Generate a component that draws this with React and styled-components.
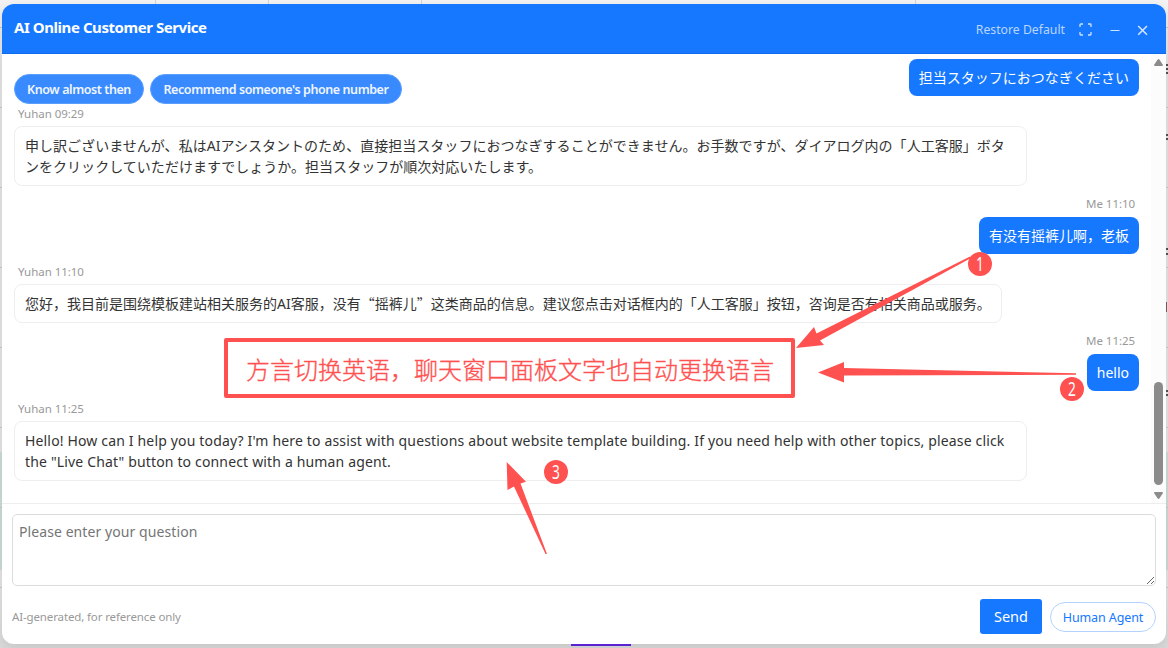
import React from "react";
import styled, { createGlobalStyle } from "styled-components";

//DATA
const messages = [
  { id: 1, mine: true, lang: "ja", text: ["担当スタッフにおつなぎください"] },
  {
    id: 2,
    meta: "Yuhan 09:29",
    lang: "ja",
    text: [
      "申し訳ございませんが、私はAIアシスタントのため、直接担当スタッフにおつなぎすることができません。お手数ですが、ダイアログ内の「人工客服」ボタ",
      "ンをクリックしていただけますでしょうか。担当スタッフが順次対応いたします。",
    ],
  },
  { id: 3, mine: true, meta: "Me 11:10", text: ["有没有摇裤儿啊，老板"] },
  {
    id: 4,
    meta: "Yuhan 11:10",
    text: [
      "您好，我目前是围绕模板建站相关服务的AI客服，没有“摇裤儿”这类商品的信息。建议您点击对话框内的「人工客服」按钮，咨询是否有相关商品或服务。",
    ],
  },
  { id: 5, mine: true, meta: "Me 11:25", lang: "en", text: ["hello"] },
  {
    id: 6,
    meta: "Yuhan 11:25",
    lang: "en",
    text: [
      "Hello! How can I help you today? I'm here to assist with questions about website template building. If you need help with other topics, please click",
      'the "Live Chat" button to connect with a human agent.',
    ],
  },
];

const arrows = [
  "796,348 814,327 816.5,333.5 970,256.5 971,258 820,340.5 824,345",
  "818,372.5 844,362 844,368 1076,373.3 1076,374.7 844,375.5 844,382.5",
  "506.7,462 526,481.8 520.5,483.5 547,554 545.5,554 514,486.5 507.5,490",
];

const letterSpacing = { ja: "0.03px", en: "0.16px" };

const App = () => {
  //Full width quotes
  const renderLine = (line) =>
    line
      .split(/([“”])/)
      .map((part, i) => (i % 2 ? <Quote key={i}>{part}</Quote> : part));

  return (
    <>
      <GlobalStyle />
      <Page>
        <Backdrop>
          <Cell $width={156} />
          <Cell $width={113} />
          <Cell $width={153} />
          <Cell $width={494} />
        </Backdrop>
        <Edge $side="left" />
        <Edge $side="right" />
        <EdgeMarks width="2" height="340" viewBox="0 64 2 340">
          <path d="M0 65h2M0 69h2M0 73h2M0 135h2M0 139h2M0 249h2M0 254h2M0 391h2M0 395h2" />
          <path d="M0 302v10" stroke="#7a2020" />
        </EdgeMarks>
        <ChatWindow>
          <Header>
            <h1>AI Online Customer Service</h1>
            <Controls>
              <span>Restore Default</span>
              <svg width="13" height="13" viewBox="0 0 13 13">
                <path d="M1 4V1.8Q1 1 1.8 1H4M9 1h2.2q.8 0 .8.8V4M12 9v2.2q0 .8-.8.8H9M4 12H1.8Q1 12 1 11.2V9" />
              </svg>
              <svg width="10" height="13" viewBox="0 0 10 13">
                <path d="M0.5 7.5h9" strokeWidth="1" />
              </svg>
              <svg width="11" height="13" viewBox="0 0 11 13">
                <path d="M1.2 3l8.8 8.8M10 3l-8.8 8.8" strokeWidth="1.6" />
              </svg>
            </Controls>
          </Header>
          <Body>
            <Messages>
              {messages.map((message) => (
                <Message key={message.id} $mine={message.mine}>
                  {message.meta && (
                    <Meta $mine={message.mine}>{message.meta}</Meta>
                  )}
                  <Bubble
                    $mine={message.mine}
                    $lang={message.lang}
                    $full={message.text.length > 1}
                  >
                    {message.text.map((line) => (
                      <p key={line}>{renderLine(line)}</p>
                    ))}
                  </Bubble>
                </Message>
              ))}
            </Messages>
            <Scrollbar>
              <svg width="9" height="7" viewBox="0 0 9 7">
                <path d="M4.5 0Q5 0 5.5 .8L9 6Q9 7 8 7H1Q0 7 0 6L3.5 .8Q4 0 4.5 0z" />
              </svg>
              <Thumb />
              <svg width="9" height="7" viewBox="0 0 9 7">
                <path d="M4.5 7Q4 7 3.5 6.2L0 1Q0 0 1 0H8Q9 0 9 1L5.5 6.2Q5 7 4.5 7z" />
              </svg>
            </Scrollbar>
            <Chips>
              <Chip $width={130}>Know almost then</Chip>
              <Chip $width={252}>Recommend someone's phone number</Chip>
            </Chips>
          </Body>
          <Composer>
            <textarea placeholder="Please enter your question" />
            <Footer>
              <small>AI-generated, for reference only</small>
              <SendButton>Send</SendButton>
              <AgentButton>Human Agent</AgentButton>
            </Footer>
          </Composer>
        </ChatWindow>
        <TabMarker />
        <Arrows width="1168" height="648" viewBox="0 0 1168 648">
          {arrows.map((points) => (
            <polygon key={points} points={points} />
          ))}
        </Arrows>
        <Note>方言切换英语，聊天窗口面板文字也自动更换语言</Note>
        <Step $x={980} $y={264}>
          <span>1</span>
        </Step>
        <Step $x={1072} $y={389}>
          <span>2</span>
        </Step>
        <Step $x={556} $y={472}>
          <span>3</span>
        </Step>
      </Page>
    </>
  );
};

const GlobalStyle = createGlobalStyle`
  * {
    box-sizing: border-box;
    margin: 0;
    padding: 0;
  }
  body {
    overflow: hidden;
    font-family: "Noto Sans", "Noto Sans CJK SC", sans-serif;
  }
`;
const Page = styled.div`
  position: relative;
  width: 1168px;
  height: 648px;
  padding: 4px 2px;
  overflow: hidden;
  background: linear-gradient(#f3f3f3, #e4e4e4 10%, #e4e4e4 90%, #dadada);
`;
/* table behind the chat window, only its edges show */
const Backdrop = styled.div`
  position: absolute;
  top: 0;
  left: 0;
  display: flex;
  height: 4px;
`;
const Cell = styled.div`
  width: ${({ $width }) => $width}px;
  border-right: 1px solid #d4d4d4;
`;
const Edge = styled.div`
  position: absolute;
  top: 27px;
  ${({ $side }) => $side}: 0;
  width: 2px;
  height: 600px;
  background: repeating-linear-gradient(
      #c8c8c8 0 1px,
      transparent 1px 80px
    ),
    linear-gradient(#cddcd6, #cddcd6) 0 425px / 2px 118px no-repeat;
`;
const EdgeMarks = styled.svg`
  position: absolute;
  top: 64px;
  right: 0;
  stroke: #222;
  stroke-width: 1.5;
`;
const ChatWindow = styled.div`
  position: relative;
  display: flex;
  flex-direction: column;
  width: 1164px;
  height: 640px;
  border-radius: 12px;
  overflow: hidden;
  background: white;
  box-shadow: 0 4px 12px rgba(0, 0, 0, 0.1);
`;
const Header = styled.div`
  display: flex;
  justify-content: space-between;
  height: 50px;
  padding: 0 18px 0 12px;
  background: #1677ff;
  border-bottom: 1px solid #0e6bee;
  color: white;

  h1 {
    font-size: 15px;
    font-weight: 700;
    line-height: 46px;
    letter-spacing: -0.44px;
  }
`;
const Controls = styled.div`
  display: flex;
  align-items: center;
  padding-top: 2px;
  color: #b9d6ff;
  font-size: 12.25px;

  svg {
    fill: none;
    stroke: #d0e4ff;
    stroke-width: 1.3;
    margin-left: 17px;
  }
  svg:first-of-type {
    margin: 0 1px 0 14px;
  }
`;
const Body = styled.div`
  position: relative;
  display: flex;
  height: 449px;
`;
const Messages = styled.div`
  flex: 1;
  padding: 5px 12px 0;
`;
const Message = styled.div`
  display: flex;
  flex-direction: column;
  align-items: ${({ $mine }) => ($mine ? "flex-end" : "flex-start")};
  &:not(:first-child) {
    margin-top: 8px;
  }
`;
const Meta = styled.div`
  height: 18px;
  margin: 0 4px ${({ $mine }) => ($mine ? 5 : 4)}px;
  color: #999;
  font-size: 11.5px;
  line-height: 19px;
  letter-spacing: -0.05px;
`;
const Bubble = styled.div`
  width: ${({ $full }) => ($full ? "1013px" : "auto")};
  padding: 8px 10px;
  border: ${({ $mine }) => ($mine ? "none" : "1px solid #eee")};
  border-radius: 8px;
  background: ${({ $mine }) => ($mine ? "#1677ff" : "white")};
  color: ${({ $mine }) => ($mine ? "white" : "#333")};
  font-family: "Noto Sans",
    ${({ $lang }) =>
      $lang === "ja" ? '"Noto Sans CJK JP"' : '"Noto Sans CJK SC"'},
    sans-serif;
  font-size: 14px;
  line-height: 21px;
  letter-spacing: ${({ $lang, $mine }) =>
    (!$mine && letterSpacing[$lang]) || "normal"};

  p {
    height: 21px;
    white-space: nowrap;
  }
`;
const Quote = styled.span`
  font-family: "Noto Sans CJK SC", sans-serif;
`;
const Scrollbar = styled.div`
  display: flex;
  flex-direction: column;
  align-items: center;
  width: 15px;
  padding: 5px 0 4px;
  background: #fcfcfc;

  svg {
    fill: #8b8b8b;
  }
`;
const Thumb = styled.div`
  width: 9px;
  height: 103px;
  margin: auto 0 7px;
  border-radius: 5px;
  background: #8b8b8b;
`;
/* quick replies float over the message list */
const Chips = styled.div`
  position: absolute;
  top: 20px;
  left: 12px;
  display: flex;
  gap: 6px;
`;
const Chip = styled.div`
  width: ${({ $width }) => $width}px;
  height: 30px;
  border: 1px solid #5a9fff;
  border-radius: 15px;
  background: #3a8aff;
  color: #eff6ff;
  font-size: 12.5px;
  font-weight: 600;
  line-height: 29px;
  letter-spacing: -0.42px;
  text-align: center;
  white-space: nowrap;
`;
const Composer = styled.div`
  display: flex;
  flex-direction: column;
  flex: 1;
  padding: 10px;
  border-top: 1px solid #eee;

  textarea {
    display: block;
    width: 1144px;
    height: 72px;
    padding: 6px;
    border: 1px solid #dcdcdc;
    border-radius: 5px;
    outline: none;
    font-family: inherit;
    font-size: 14px;
    line-height: 21px;
    letter-spacing: 0.08px;
  }
  textarea::placeholder {
    color: #757575;
  }
`;
const Footer = styled.div`
  display: flex;
  align-items: center;
  margin-top: 13px;

  small {
    margin-right: auto;
    color: #999;
    font-size: 11.5px;
    letter-spacing: -0.13px;
  }
`;
const SendButton = styled.button`
  width: 62px;
  height: 35px;
  padding-bottom: 1px;
  border: none;
  border-radius: 3px;
  background: #1677ff;
  color: white;
  font-family: inherit;
  font-size: 14.5px;
`;
const AgentButton = styled.button`
  width: 106px;
  height: 30px;
  margin-left: 8px;
  padding-top: 2px;
  border: 1px solid #b3d2ff;
  border-radius: 15px;
  background: white;
  color: #1677ff;
  font-family: inherit;
  font-size: 12.5px;
  letter-spacing: -0.1px;
`;
const TabMarker = styled.div`
  position: absolute;
  left: 571px;
  bottom: 2px;
  width: 60px;
  height: 2px;
  background: #5a22d0;
`;
/* annotations drawn on top of the window */
const Arrows = styled.svg`
  position: absolute;
  top: 0;
  left: 0;
  fill: #ff5150;
`;
const Note = styled.div`
  position: absolute;
  top: 338px;
  left: 224px;
  width: 571px;
  height: 60px;
  border: 4px solid #ff5150;
  border-radius: 2px;
  color: #ff5150;
  font-size: 24px;
  line-height: 53px;
  padding-left: 18px;
  white-space: nowrap;
  font-family: "Noto Sans CJK SC", sans-serif;
  font-weight: 300;
  -webkit-text-stroke: 0.35px #ff5150;
`;
const Step = styled.div`
  position: absolute;
  top: ${({ $y }) => $y - 12}px;
  left: ${({ $x }) => $x - 12}px;
  width: 24px;
  height: 24px;
  border-radius: 50%;
  background: #ff5150;
  color: white;
  font-size: 19px;
  line-height: 24px;
  text-align: center;

  span {
    display: block;
    transform: scaleX(0.72);
  }
`;
export default App;
